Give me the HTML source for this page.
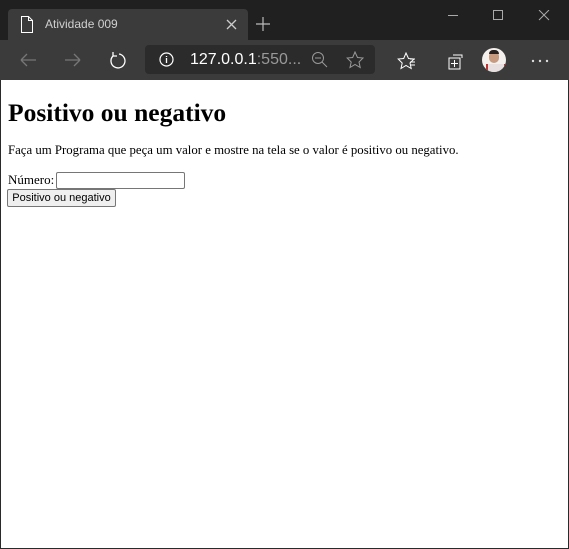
<!DOCTYPE html>
<html><head><style>
body{margin:0;width:569px;height:549px;background:#2a2a2a;overflow:hidden;position:relative;font-family:"Liberation Sans",sans-serif}
.tabbar{position:absolute;left:0;top:0;width:569px;height:40px;background:#202020}
.tab{position:absolute;left:8px;top:9px;width:240px;height:31px;background:#3b3b3b;border-radius:4px 4px 0 0}
.tab span{position:absolute;left:37px;top:8px;color:#d0d0d0;font-size:12px}
.toolbar{position:absolute;left:0;top:40px;width:569px;height:40px;background:#3b3b3b}
.addr{position:absolute;left:145px;top:5px;width:230px;height:29px;background:#2b2b2b;border-radius:4px}
.addr span{position:absolute;left:45px;top:6px;font-size:16px;color:#fff}
.content{position:absolute;left:1px;top:80px;width:567px;height:468px;background:#fff;font-family:"Liberation Serif",serif;color:#000}
h1{position:absolute;left:7px;top:18px;margin:0;font-size:25.5px;font-weight:bold}
p{position:absolute;left:7px;top:63px;margin:0;font-size:12.8px}
.lbl{position:absolute;left:7px;top:92px;font-size:13px}
.inp{position:absolute;left:55px;top:92px;width:127px;height:15px;border:1px solid #767676;border-radius:2px}
.btn{position:absolute;left:6px;top:109px;width:107px;height:16px;border:1px solid #767676;border-radius:2px;background:#efefef;font-family:"Liberation Sans",sans-serif;font-size:11px;text-align:center;line-height:16px}
svg{position:absolute}
</style></head><body>
<div class="tabbar">
<div class="tab">
<svg style="left:12px;top:7px" width="14" height="17"><path d="M1.5 .5h7l4 4v12h-11z M8.5 .5v4h4" fill="none" stroke="#fff"/></svg>
<span>Atividade 009</span>
<svg style="left:218px;top:10px" width="11" height="11"><path d="M1 1l9 9M10 1l-9 9" stroke="#ccc" stroke-width="1.3"/></svg>
</div>
<svg style="left:256px;top:17px" width="14" height="14"><path d="M7 0v14M0 7h14" stroke="#bbb" stroke-width="1.2"/></svg>
<svg style="left:448px;top:10px" width="110" height="12"><path d="M0 5.5h10" stroke="#aaa"/><path d="M45.5 .5h9v9h-9z" fill="none" stroke="#aaa"/><path d="M91 0l10 10M101 0l-10 10" stroke="#aaa"/></svg>
</div>
<div class="toolbar">
<svg style="left:20px;top:12px" width="160" height="18"><path d="M1 8h15M1 8l6-6M1 8l6 6" stroke="#777" fill="none" stroke-width="1.3"/><path d="M45 8h15M60 8l-6-6M60 8l-6 6" stroke="#777" fill="none" stroke-width="1.3"/><path d="M93 4a7 7 0 1 0 6 -2M93 0v4h4" stroke="#fff" fill="none" stroke-width="1.3"/></svg>
<div class="addr">
<svg style="left:14px;top:7px" width="15" height="15"><circle cx="7.5" cy="7.5" r="6.5" stroke="#fff" fill="none" stroke-width="1.2"/><path d="M7.5 6v5M7.5 4v1" stroke="#fff" stroke-width="1.3"/></svg>
<span>127.0.0.1<span style="position:static;color:#999">:550...</span></span>
<svg style="left:166px;top:6px" width="60" height="18"><circle cx="7" cy="7" r="5.5" stroke="#999" fill="none"/><path d="M4 7h6M11 11l5 5" stroke="#999"/><path d="M44 1l2.5 5.5 5.5.5-4 4 1.2 5.5-5.2-3-5 3 1.2-5.5-4-4 5.5-.5z" stroke="#999" fill="none"/></svg>
</div>
<svg style="left:396px;top:12px" width="120" height="20"><path d="M10 1l2.5 5.5 5.5.5-4 4 1.2 5.5-5.2-3-5 3 1.2-5.5-4-4 5.5-.5z" stroke="#fff" fill="none"/><path d="M14 7h5M14 10h5M14 13h5" stroke="#fff"/><path d="M57 3h9v3M53 6h11v11H53z M58.5 8v7M55 11.5h7" stroke="#fff" fill="none"/></svg>
<div style="position:absolute;left:482px;top:8px;width:24px;height:24px;border-radius:50%;background:#f4f0ee;overflow:hidden"><div style="position:absolute;left:7px;top:3px;width:10px;height:12px;border-radius:5px;background:#c89a80"></div><div style="position:absolute;left:7px;top:2px;width:10px;height:4px;background:#2a2020;border-radius:4px 4px 0 0"></div><div style="position:absolute;left:4px;top:16px;width:16px;height:8px;background:#e8e0e0;border-left:2px solid #b33;border-right:2px solid #b33"></div></div>
<svg style="left:531px;top:19px" width="18" height="4"><circle cx="2" cy="2" r="1.2" fill="#ddd"/><circle cx="9" cy="2" r="1.2" fill="#ddd"/><circle cx="16" cy="2" r="1.2" fill="#ddd"/></svg>
</div>
<div class="content">
<h1>Positivo ou negativo</h1>
<p>Faça um Programa que peça um valor e mostre na tela se o valor é positivo ou negativo.</p>
<div class="lbl">Número:</div>
<div class="inp"></div>
<div class="btn">Positivo ou negativo</div>
</div>
</body></html>
